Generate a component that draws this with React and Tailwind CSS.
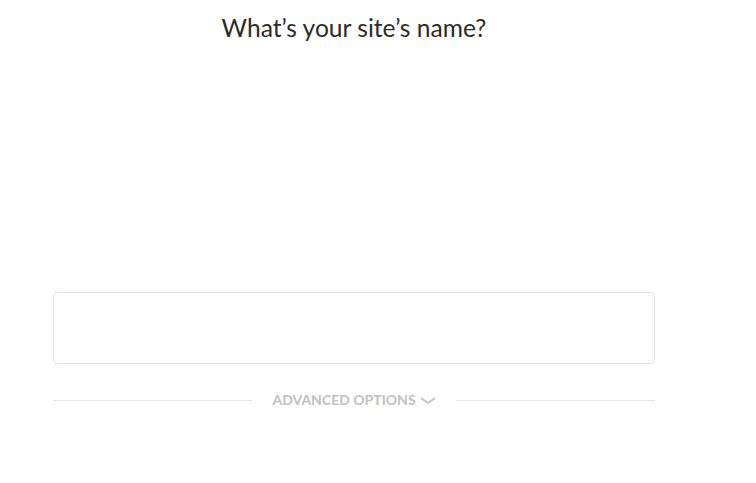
export default function App() {
  return (
    <div className="min-h-[483px] w-[756px] bg-white">
      <div className="ml-[53px] w-[602px]">
        <h1 className="pt-[13px] text-center text-[24.6px] leading-[30px] text-[#2b2b2b] font-normal" style={{ fontFamily: "Lato, 'Open Sans', sans-serif" }}>
          What’s your site’s name?
        </h1>
        <div className="mt-[249px] h-[72px] rounded-[4px] border border-[#e4e4e4] bg-white"></div>
        <div className="mt-[27px] flex items-center">
          <div className="h-px flex-1 bg-[#e4e4e4]"></div>
          <button className="mx-[20px] flex items-center gap-[4px] text-[14px] font-bold uppercase leading-[18px] text-[#c3c0c0]" style={{ fontFamily: "Lato, sans-serif" }}>
            Advanced options
            <svg width="16" height="10" viewBox="0 0 16 10" fill="none" className="mt-[2px]">
              <path d="M1.5 2.5 L8 7 L14.5 2.5" stroke="#c3c0c0" strokeWidth="1.8" strokeLinecap="round" strokeLinejoin="round" />
            </svg>
          </button>
          <div className="h-px flex-1 bg-[#e4e4e4]"></div>
        </div>
      </div>
    </div>
  );
}
